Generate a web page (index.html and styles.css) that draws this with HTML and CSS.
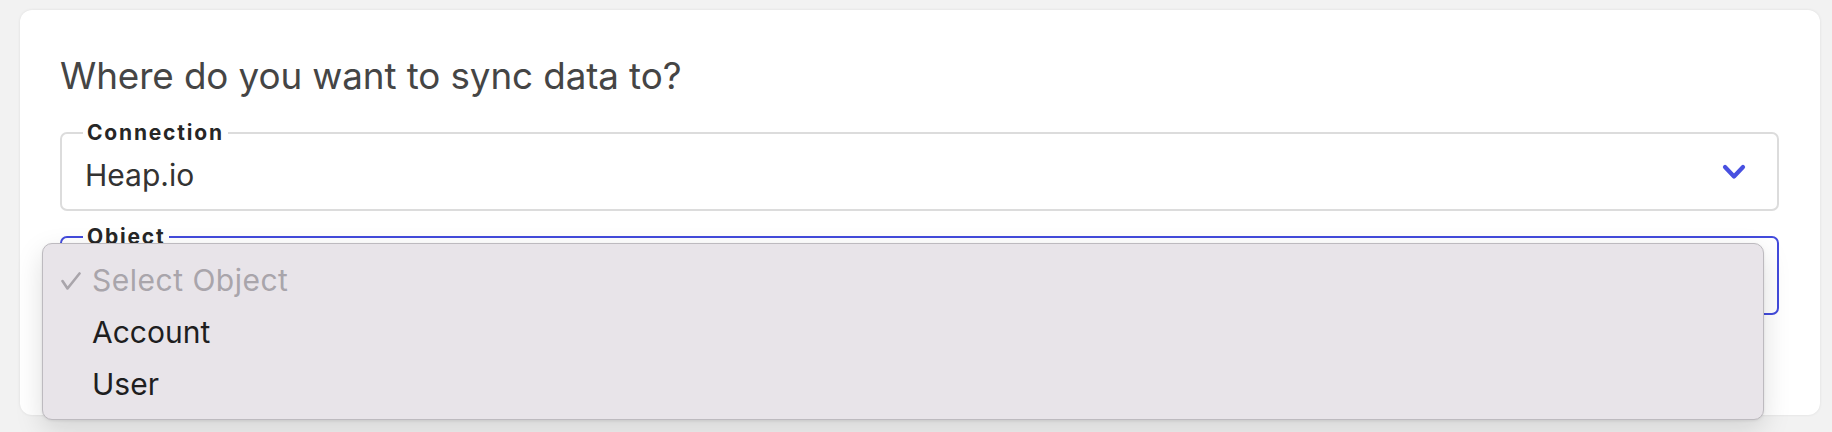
FILE: index.html
```html
<!DOCTYPE html>
<html lang="en">
<head>
<meta charset="utf-8">
<title>Sync destination</title>
<link rel="stylesheet" href="styles.css">
</head>
<body>
<div class="page">
  <section class="card">
    <h1 class="title">Where do you want to sync data to?</h1>
    <fieldset class="field">
      <legend class="field-label">Connection</legend>
      <div class="field-row">
        <span class="field-value">Heap.io</span>
        <svg class="chevron" width="24" height="16" viewBox="0 0 24 16" aria-hidden="true">
          <polyline points="3,3 12,12.5 21,3" fill="none" stroke="#4850e0" stroke-width="4.2" stroke-linecap="round" stroke-linejoin="round"/>
        </svg>
      </div>
    </fieldset>
    <fieldset class="field field-active">
      <legend class="field-label">Object</legend>
      <div class="field-row"></div>
    </fieldset>

    <ul class="menu" role="listbox">
      <li class="menu-item is-selected">
        <svg class="check" width="20" height="18" viewBox="0 0 20 18" aria-hidden="true">
          <polyline points="1.5,9 6.5,16.5 18.5,1.5" fill="none" stroke="#a9a5ab" stroke-width="2.6" stroke-linecap="round" stroke-linejoin="round"/>
        </svg>
        <span>Select Object</span>
      </li>
      <li class="menu-item"><span>Account</span></li>
      <li class="menu-item"><span>User</span></li>
    </ul>
  </section>
</div>
</body>
</html>
```

FILE: styles.css
```css
* { box-sizing: border-box; }

html, body {
  margin: 0;
  padding: 0;
  background: #f2f2f2;
}

body {
  font-family: Inter, "Noto Sans", "Liberation Sans", sans-serif;
  width: 1832px;
  height: 432px;
  overflow: hidden;
}

.page {
  padding: 10px 12px 0 20px;
}

.card {
  position: relative;
  width: 1800px;
  height: 405px;
  background: #ffffff;
  border-radius: 12px;
  box-shadow: 0 0 3px rgba(0, 0, 0, 0.09);
  padding: 44px 41px 0 40px;
}

.title {
  margin: 0 0 23px 0;
  font-size: 36.8px;
  line-height: 44px;
  font-weight: 400;
  color: #454545;
  letter-spacing: -0.1px;
}

.field {
  margin: 0 0 14px 0;
  padding: 0 21px 0 21px;
  border: 2px solid #dcdcdc;
  border-radius: 7px;
  height: 90px;
  min-width: 0;
}

.field-active {
  border-color: #434bdc;
}

.field-label {
  padding: 0 4px;
  font-size: 21px;
  line-height: 24px;
  font-weight: 700;
  color: #262626;
  letter-spacing: 1.8px;
}

.field-row {
  display: flex;
  align-items: center;
  justify-content: space-between;
  height: 52px;
  padding: 0 10px 0 2px;
}

.field-value {
  font-size: 30px;
  line-height: 36px;
  color: #333333;
  margin-top: 7px;
}

.chevron {
  display: block;
  margin-top: 2px;
}

.menu {
  position: absolute;
  left: 22px;
  top: 233px;
  width: 1722px;
  height: 177px;
  margin: 0;
  padding: 10px 0 0 0;
  list-style: none;
  background: #e8e4e9;
  border: 1px solid #bdbabf;
  border-radius: 10px;
  box-shadow: 0 10px 28px rgba(0, 0, 0, 0.13), 0 1px 3px rgba(0, 0, 0, 0.08);
}

.menu-item {
  display: flex;
  align-items: center;
  height: 52px;
  padding-left: 49px;
  font-size: 30px;
  line-height: 52px;
  color: #1e1e1f;
}

.menu-item.is-selected {
  padding-left: 18px;
  color: #a9a5ab;
  letter-spacing: 0.5px;
}

.check {
  display: block;
  margin-right: 11px;
  margin-top: 2px;
}
```
